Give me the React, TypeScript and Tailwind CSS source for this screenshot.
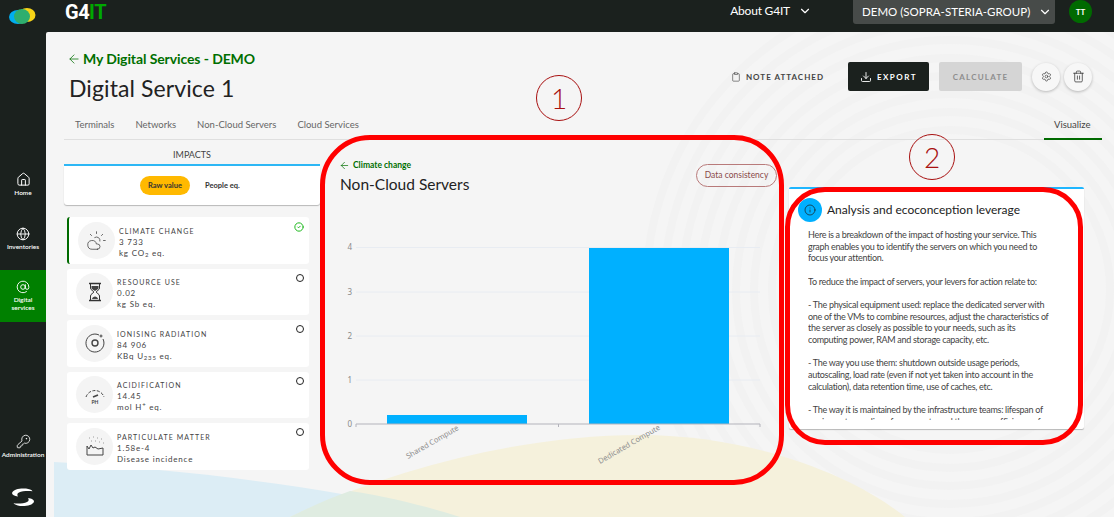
import type { ReactNode } from "react";
import {
  ArrowLeft,
  AtSign,
  ChevronDown,
  CircleCheck,
  Clipboard,
  CloudSun,
  Download,
  Globe,
  Home,
  Info,
  KeyRound,
  Settings,
  Trash2,
} from "lucide-react";

const LINES = [
  "Here is a breakdown of the impact of hosting your service. This",
  "graph enables you to identify the servers on which you need to",
  "focus your attention.",
  "",
  "To reduce the impact of servers, your levers for action relate to:",
  "",
  "- The physical equipment used: replace the dedicated server with",
  "one of the VMs to combine resources, adjust the characteristics of",
  "the server as closely as possible to your needs, such as its",
  "computing power, RAM and storage capacity, etc.",
  "",
  "- The way you use them: shutdown outside usage periods,",
  "autoscaling, load rate (even if not yet taken into account in the",
  "calculation), data retention time, use of caches, etc.",
  "",
  "- The way it is maintained by the infrastructure teams: lifespan of",
  "equipment, recycling of spare parts, and the energy efficiency of",
];

const HourglassIcon = () => (
  <svg width="22" height="22" viewBox="0 0 22 22" fill="none" stroke="#333" strokeWidth="1">
    <path d="M5 2.500h12M5 19.500h12" strokeWidth="1.500" />
    <path d="M6.500 3v4c0 2 3 3 3.500 4-.5 1-3.500 2-3.500 4v4M15.500 3v4c0 2-3 3-3.500 4 .5 1 3.500 2 3.500 4v4" />
    <path d="M7.500 5h7v2c0 1-2 2-3.500 3C9.500 9 7.500 8 7.500 7zM8 18c0-1.500 2-2.500 3-2.500s3 1 3 2.500z" fill="#444" stroke="none" />
  </svg>
);

const RadiationIcon = () => (
  <svg width="22" height="22" viewBox="0 0 22 22" fill="none" stroke="#444" strokeWidth="1">
    <path d="M15 3a9 9 0 1 0 4 4" />
    <circle cx="11" cy="11" r="3" strokeWidth="1.400" />
    <circle cx="17" cy="4" r="1" />
  </svg>
);

const GaugeIcon = () => (
  <svg width="22" height="22" viewBox="0 0 22 22" fill="none" stroke="#444" strokeWidth="1">
    <path d="M2 13a9.500 9.500 0 0 1 18 0" strokeDasharray="3 1.500" />
    <path d="M9 13l5-2" strokeWidth="1.600" />
    <text x="11" y="20" fontSize="5" fontWeight="700" textAnchor="middle" fill="#444" stroke="none">
      PH
    </text>
  </svg>
);

const FactoryIcon = () => (
  <svg width="22" height="22" viewBox="0 0 22 22" fill="none" stroke="#444" strokeWidth="1">
    <path d="M3 20v-9l2 3 2-4 2 3 2-1 3 2 5-1v7z" />
    <path d="M5 3h.5M9 2h.5M13 3h.5M17 4h.5M7 6h.5M11 6h.5M15 7h.5M19 8h.5" strokeWidth="1.200" strokeDasharray="1 1" />
  </svg>
);

const IMPACTS: {
  name: string;
  value: string;
  unit: ReactNode;
  icon: ReactNode;
  active?: boolean;
}[] = [
  {
    name: "CLIMATE CHANGE",
    value: "3 733",
    unit: (
      <>
        kg CO<sub className="text-[6px]">2</sub> eq.
      </>
    ),
    icon: <CloudSun size={21} strokeWidth={0.9} color="#444" />,
    active: true,
  },
  { name: "RESOURCE USE", value: "0.02", unit: "kg Sb eq.", icon: <HourglassIcon /> },
  {
    name: "IONISING RADIATION",
    value: "84 906",
    unit: (
      <>
        KBq U<sub className="text-[6px]">235</sub> eq.
      </>
    ),
    icon: <RadiationIcon />,
  },
  {
    name: "ACIDIFICATION",
    value: "14.45",
    unit: (
      <>
        mol H<sup className="text-[6px]">+</sup> eq.
      </>
    ),
    icon: <GaugeIcon />,
  },
  { name: "PARTICULATE MATTER", value: "1.58e-4", unit: "Disease incidence", icon: <FactoryIcon /> },
];

function NavItem({ icon, label, active }: { icon: ReactNode; label: ReactNode; active?: boolean }) {
  return (
    <div
      className={`flex flex-col items-center justify-center text-center text-[6.5px] font-semibold leading-[8px] text-white ${
        active ? "h-[52px] bg-[#008000]" : "h-[40px]"
      }`}
    >
      {icon}
      <span className="mt-[2px]">{label}</span>
    </div>
  );
}

function ImpactCard({ item }: { item: (typeof IMPACTS)[number] }) {
  return (
    <div
      className={`relative flex h-[46.5px] items-center rounded-[3px] bg-white ${
        item.active ? "border-l-2 border-[#006a00] pl-[9px]" : "pl-[9px]"
      }`}
    >
      <div className="flex h-[37px] w-[37px] shrink-0 items-center justify-center rounded-full bg-[#f4f4f4]">
        {item.icon}
      </div>
      <div className="ml-[4px] pt-[3px] text-[#444]">
        <div className="text-[7px] leading-[11px] tracking-[1.1px]">{item.name}</div>
        <div className="text-[8px] leading-[11px] tracking-[0.8px]">{item.value}</div>
        <div className="text-[8px] leading-[10px] tracking-[0.8px] [&_sub]:leading-none [&_sup]:leading-none">{item.unit}</div>
      </div>
      <div className="absolute right-[5px] top-[5px]">
        {item.active ? (
          <CircleCheck size={10} strokeWidth={2.4} color="#1fb91f" />
        ) : (
          <div className="h-[8px] w-[8px] rounded-full border-[1.5px] border-[#222]" />
        )}
      </div>
    </div>
  );
}

function Chart() {
  const ys = [247.5, 292, 336, 380];
  return (
    <svg width="461" height="290" viewBox="322 200 461 290" className="block" style={{ fontFamily: "'Noto Sans', sans-serif" }}>
      {ys.map((y) => (
        <line key={y} x1="356" x2="760" y1={y} y2={y} stroke="#e8ecf2" strokeWidth="1" />
      ))}
      {["4", "3", "2", "1", "0"].map((t, i) => (
        <text key={t} x="352" y={[250, 295, 339, 383, 427][i]} fontSize="8" fill="#8a8a8a" textAnchor="end">
          {t}
        </text>
      ))}
      <rect x="387" y="415" width="140" height="9" fill="#00b0ff" />
      <rect x="589" y="248" width="140" height="176" fill="#00b0ff" />
      <path d="M356 427v-3h404v3M558.5 424v3" fill="none" stroke="#b3b3bb" strokeWidth="1" />
      <text transform="translate(408 459) rotate(-30)" fontSize="7.5" fill="#8f8f8f">
        Shared Compute
      </text>
      <text transform="translate(600 464) rotate(-30)" fontSize="7.5" fill="#8f8f8f">
        Dedicated Compute
      </text>
    </svg>
  );
}

export default function App() {
  return (
    <div
      className="relative flex h-[517px] w-[1114px] flex-col overflow-hidden bg-[#1b211e]"
      style={{ fontFamily: "Lato, sans-serif" }}
    >
      {/* top bar */}
      <header className="flex h-[32px] shrink-0 items-start text-white">
        <div className="flex h-[32px] w-[65px] items-center pl-[9px]">
          <svg width="27" height="18" viewBox="0 0 27 18">
            <ellipse cx="9" cy="10" rx="9" ry="7" fill="#00aeef" />
            <ellipse cx="18" cy="8" rx="8.500" ry="7" fill="#f7d417" />
            <ellipse cx="13" cy="9.500" rx="8" ry="7.500" fill="#2fae6e" />
          </svg>
        </div>
        <div className="text-[20px] font-bold leading-[24px] tracking-[-0.5px]" style={{ fontFamily: "Roboto, sans-serif" }}>
          G4<span className="text-[#00a800]">IT</span>
        </div>
        <div className="ml-auto flex h-[22px] items-center whitespace-nowrap text-[12px] tracking-[-0.2px]">
          About G4IT
          <ChevronDown size={14} className="ml-[8px]" />
        </div>
        <div className="ml-[41px] flex h-[24px] w-[202px] items-center justify-between whitespace-nowrap rounded-b-[3px] bg-[#474b49] pl-[9px] pr-[3px] text-[11.5px]">
          DEMO (SOPRA-STERIA-GROUP)
          <ChevronDown size={14} />
        </div>
        <div className="ml-[14px] mr-[22px] flex h-[23px] w-[23px] items-center justify-center rounded-full bg-[#006a00] text-[8px] font-bold">
          TT
        </div>
      </header>

      <div className="flex min-h-0 flex-1">
        {/* side nav */}
        <nav className="flex w-[46px] shrink-0 flex-col pt-[132px]">
          <NavItem icon={<Home size={15} strokeWidth={1.6} />} label="Home" />
          <div className="h-[15px]" />
          <NavItem icon={<Globe size={14} strokeWidth={1.6} />} label="Inventories" />
          <div className="h-[11px]" />
          <NavItem icon={<AtSign size={14} strokeWidth={1.6} />} label={<>Digital<br />services</>} active />
          <div className="h-[104px]" />
          <NavItem icon={<KeyRound size={15} strokeWidth={1.3} />} label="Administration" />
          <div className="mt-[22px] flex justify-center">
            <svg width="24" height="19" viewBox="0 0 24 19" fill="#fff">
              <path d="M1 5C2 1 10 0 15 .6c3 .4 6 1.600 6.500 2.600C17 2.600 11 3 8 4.400 6 5.400 6 7 7 8.500 3.500 8 1 7 1 5z" />
              <path d="M23 13.500c-1 4-9 5-14 4.400-3-.4-6-1.600-6.500-2.600C7 16 13 15.500 16 14c2-1 2-2.600 1-4 3.500.5 6 1.500 6 3.500z" />
            </svg>
          </div>
        </nav>

        {/* page */}
        <main className="relative min-w-0 flex-1 overflow-hidden rounded-tl-[2px] bg-[#f5f5f5] pl-[18px] pr-[12px]">
          {/* background art */}
          <svg className="absolute left-0 top-0" width="1068" height="485" viewBox="46 32 1068 485" fill="none">
            {[160, 178, 196, 214, 232, 250, 268, 286, 304].map((r) => (
              <circle key={r} cx="950" cy="290" r={r} stroke="#f2f2f2" strokeWidth="8" />
            ))}
            <path d="M54 517V462C200 470 340 490 460 517Z" fill="#dcedf5" />
            <path d="M290 517C400 465 530 435 640 435C760 435 860 480 905 517Z" fill="#f5f1dc" />
            <path d="M290 517C310 507 330 498 350 491C390 497 425 506 460 517Z" fill="#dfece1" />
          </svg>

          <div className="relative">
            <div className="flex h-[75px] items-start justify-between">
              <div>
                <div className="mt-[18px] flex items-center whitespace-nowrap text-[14px] font-bold leading-[18px] tracking-[-0.1px] text-[#006f00]">
                  <ArrowLeft size={14} strokeWidth={1.3} className="ml-[3px] mr-[2px]" />
                  My Digital Services - DEMO
                </div>
                <h1 className="ml-[5px] mt-[5px] text-[23px] font-normal leading-[30px] tracking-[0.1px] text-[#222]">Digital Service 1</h1>
              </div>
              <div className="mr-[10px] mt-[30px] flex items-center">
                <div className="mr-[24px] flex items-center whitespace-nowrap text-[8px] font-bold tracking-[1px] text-[#444]">
                  <Clipboard size={10} strokeWidth={1.5} className="mr-[5px]" />
                  NOTE ATTACHED
                </div>
                <button className="flex h-[29px] w-[81px] items-center justify-center rounded-[2px] bg-[#1b211e] text-[8px] font-bold tracking-[1.5px] text-white">
                  <Download size={12} strokeWidth={1.8} className="mr-[5px]" />
                  EXPORT
                </button>
                <button className="ml-[10px] h-[29px] w-[83px] rounded-[2px] bg-[#d5d5d5] text-[8px] font-bold tracking-[1.2px] text-[#8e8e8e]">
                  CALCULATE
                </button>
                <button className="ml-[10px] flex h-[28px] w-[28px] items-center justify-center rounded-full bg-[#f7f7f7] shadow-[0_1px_3px_rgba(0,0,0,0.25)]">
                  <Settings size={11} strokeWidth={1.4} color="#333" />
                </button>
                <button className="ml-[4px] flex h-[28px] w-[28px] items-center justify-center rounded-full bg-[#f7f7f7] shadow-[0_1px_3px_rgba(0,0,0,0.25)]">
                  <Trash2 size={13} strokeWidth={1.4} color="#333" />
                </button>
              </div>
            </div>

            {/* tabs */}
            <div className="flex h-[33px] items-start border-b border-[#dfdfdf] pl-[11px] pt-[11px] text-[9.5px] leading-[14px] text-[#666]">
              <span className="mr-[21px]">Terminals</span>
              <span className="mr-[21px]">Networks</span>
              <span className="mr-[21px]">Non-Cloud Servers</span>
              <span>Cloud Services</span>
              <span className="-mt-[11px] ml-auto h-[33px] w-[58px] border-b-2 border-[#006a00] pl-[10px] pt-[11px] text-[#444]">Visualize</span>
            </div>

            <div className="flex items-start">
              {/* impacts */}
              <div className="w-[256px] shrink-0">
                <div className="h-[26px] border-b-2 border-[#2db7f5] pt-[8px] text-center text-[9px] leading-[14px] text-[#444]">IMPACTS</div>
                <div className="flex h-[39px] items-center rounded-b-[3px] bg-white pl-[76px] text-[7.5px] font-bold text-[#333] shadow-[0_1px_1px_rgba(0,0,0,0.25)]">
                  <span className="flex h-[19px] w-[50px] items-center justify-center rounded-full bg-[#ffb900]">Raw value</span>
                  <span className="ml-[15px]">People eq.</span>
                </div>
                <div className="ml-[3px] mr-[11px] mt-[12px] flex flex-col gap-[5px]">
                  {IMPACTS.map((item) => (
                    <ImpactCard key={item.name} item={item} />
                  ))}
                </div>
              </div>

              {/* chart */}
              <div className="ml-[2px] w-[461px] shrink-0">
                <div className="flex items-start justify-between pl-[17px] pr-[6px]">
                  <div>
                    <div className="mt-[19px] flex items-center whitespace-nowrap text-[8.5px] font-bold leading-[12px] text-[#006f00]">
                      <ArrowLeft size={11} strokeWidth={1.5} className="mr-[3px]" />
                      Climate change
                    </div>
                    <div className="ml-[1px] mt-[3px] whitespace-nowrap text-[15.5px] leading-[20px] text-[#222]">Non-Cloud Servers</div>
                  </div>
                  <div className="mt-[24px] flex h-[23px] w-[81px] items-center justify-center rounded-full border border-[#b87a7a] text-[8.5px] text-[#8a4a4a]">
                    Data consistency
                  </div>
                </div>
                <div className="mt-[6px]">
                  <Chart />
                </div>
              </div>

              {/* analysis */}
              <div className="ml-[6px] mt-[47px] h-[242px] w-[295px] shrink-0 overflow-hidden rounded-[2px] border-t-2 border-[#1fb6ff] bg-white shadow-[0_1px_1px_rgba(0,0,0,0.25)]">
                <div className="flex items-center pl-[9px] pt-[9px]">
                  <span className="flex h-[24px] w-[24px] items-center justify-center rounded-full bg-[#00b0ff]">
                    <Info size={12} strokeWidth={1.4} color="#1b211e" />
                  </span>
                  <span className="ml-[5px] text-[12px] text-[#222]">Analysis and ecoconception leverage</span>
                </div>
                <div className="ml-[19px] mt-[7px] h-[191px] overflow-hidden whitespace-nowrap text-[9px] leading-[11.67px] tracking-[-0.3px] text-[#444]">
                  {LINES.map((l, i) => (
                    <div key={i} className="h-[11.67px]">
                      {l}
                    </div>
                  ))}
                </div>
              </div>
            </div>
          </div>
        </main>
      </div>

      {/* hand-drawn annotations over the page */}
      <div className="pointer-events-none absolute left-[320px] top-[135px] h-[350px] w-[464px] rounded-[50px] border-[5px] border-[#ff0000]" />
      <div className="pointer-events-none absolute left-[785px] top-[187px] h-[258px] w-[298px] rounded-[40px] border-[5px] border-[#ff0000]" />
      <div className="pointer-events-none absolute left-[536px] top-[75px] flex h-[46px] w-[46px] items-center justify-center rounded-full border-[1.5px] border-[#a81010] text-[28px] font-light text-[#a81010]">
        1
      </div>
      <div className="pointer-events-none absolute left-[909px] top-[134px] flex h-[46px] w-[46px] items-center justify-center rounded-full border-[1.5px] border-[#a81010] text-[28px] font-light text-[#a81010]">
        2
      </div>
    </div>
  );
}
